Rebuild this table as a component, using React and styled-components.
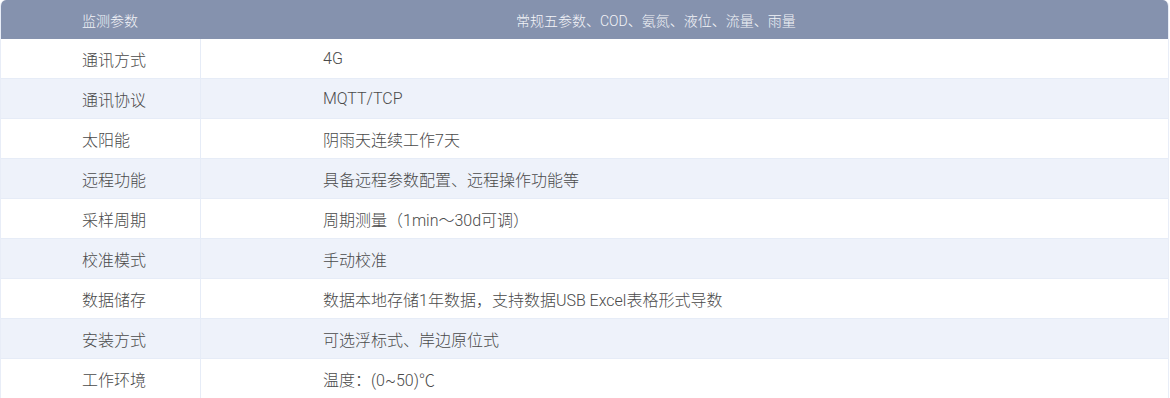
import React from 'react'
import styled, { createGlobalStyle } from 'styled-components'

const GlobalStyle = createGlobalStyle`
    body {
        margin: 0;
        background: #ffffff;
        font-family: Roboto, "Noto Sans CJK SC", sans-serif;
    }
`

const Table = styled.div`
    width: 1169px;
    border-left: 1px solid #e8edf7;
    border-right: 1px solid #e8edf7;
    border-radius: 6px 6px 0 0;
    overflow: hidden;
    box-sizing: border-box;
`

const HeaderRow = styled.div`
    display: grid;
    grid-template-columns: 200px 1fr;
    height: 39px;
    align-items: center;
    background-color: #8592ae;
    color: #f3f4f8;
    font-size: 14px;
    font-weight: 300;
`

const HeaderCell = styled.div`
    padding-left: ${(p) => p.$indent}px;
`

const Row = styled.div`
    display: grid;
    grid-template-columns: 200px 1fr;
    height: 40px;
    box-sizing: border-box;
    border-bottom: 1px solid #e6ecf7;
    background-color: ${(p) => (p.$alt ? '#eef2fa' : '#ffffff')};
    color: #4a4a4a;
    font-size: 16px;
    font-weight: 300;
`

const Cell = styled.div`
    display: flex;
    align-items: center;
    padding-left: ${(p) => p.$indent}px;
    border-right: ${(p) => (p.$divider ? '1px solid #e6ecf7' : 'none')};
`

const rows = [
    ['通讯方式', '4G'],
    ['通讯协议', 'MQTT/TCP'],
    ['太阳能', '阴雨天连续工作7天'],
    ['远程功能', '具备远程参数配置、远程操作功能等'],
    ['采样周期', '周期测量（1min～30d可调）'],
    ['校准模式', '手动校准'],
    ['数据储存', '数据本地存储1年数据，支持数据USB Excel表格形式导数'],
    ['安装方式', '可选浮标式、岸边原位式'],
    ['工作环境', '温度：(0~50)℃'],
]

function App() {
    return (
        <>
            <GlobalStyle />
            <Table>
                <HeaderRow>
                    <HeaderCell $indent={81}>监测参数</HeaderCell>
                    <HeaderCell $indent={315}>常规五参数、COD、氨氮、液位、流量、雨量</HeaderCell>
                </HeaderRow>
                {rows.map(([name, value], i) => (
                    <Row key={name} $alt={i % 2 === 1}>
                        <Cell $indent={81} $divider>{name}</Cell>
                        <Cell $indent={122}>{value}</Cell>
                    </Row>
                ))}
            </Table>
        </>
    )
}

export default App
